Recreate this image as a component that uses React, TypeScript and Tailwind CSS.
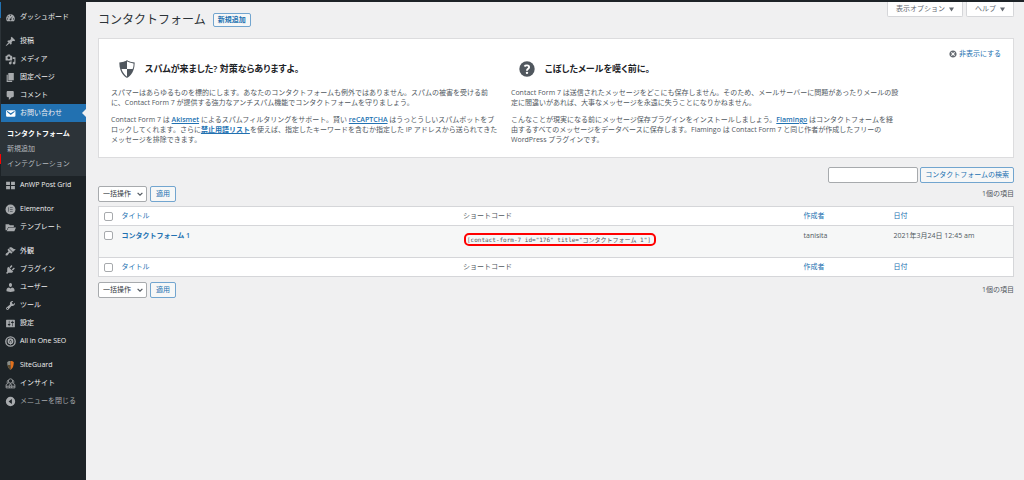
import type { ReactNode } from "react";

type MenuItem = {
  label: string;
  icon: ReactNode;
  gap?: boolean;
  active?: boolean;
  muted?: boolean;
};

type IconProps = {
  d: string;
  className?: string;
};

const Icon = ({ d, className = "size-[11px]" }: IconProps) => (
  <svg viewBox="0 0 20 20" fill="currentColor" fillRule="evenodd" className={className}>
    <path d={d} />
  </svg>
);

const paths = {
  dashboard:
    "M3.76 17h12.48c1.1-1.37 1.76-3.11 1.76-5 0-4.42-3.58-8-8-8s-8 3.58-8 8c0 1.89.66 3.63 1.76 5zM9 6a1 1 0 1 0 2 0a1 1 0 1 0-2 0zM4.800 8.500a1 1 0 1 0 2 0a1 1 0 1 0-2 0zM3.300 12.500a1 1 0 1 0 2 0a1 1 0 1 0-2 0zM14.700 12.500a1 1 0 1 0 2 0a1 1 0 1 0-2 0zM14.500 7.200l-3.200 5.200c.5.500.7 1.200.4 1.900-.4.900-1.400 1.300-2.300.9s-1.300-1.400-.9-2.300c.3-.7.9-1 1.600-1z",
  post: "M10.44 3.02l1.82-1.82 6.36 6.35-1.83 1.82c-1.05-.68-2.48-.57-3.41.36l-.75.75c-.92.93-1.04 2.35-.35 3.41l-1.83 1.82-2.41-2.41-2.8 2.79c-.42.42-3.38 2.71-3.8 2.29s1.86-3.39 2.28-3.81l2.79-2.79L4.1 9.36l1.83-1.82c1.05.69 2.48.57 3.4-.36l.75-.75c.93-.92 1.05-2.35.36-3.41z",
  media:
    "M13 11V4c0-.55-.45-1-1-1h-1.67L9 1H5L3.67 3H2c-.55 0-1 .45-1 1v7c0 .55.45 1 1 1h10c.55 0 1-.45 1-1zM7 4.5c1.38 0 2.5 1.12 2.5 2.5S8.38 9.5 7 9.5 4.5 8.38 4.5 7 5.62 4.5 7 4.5zM14 6h5v10.5c0 1.38-1.12 2.5-2.5 2.5S14 17.88 14 16.5s1.12-2.5 2.5-2.5c.17 0 .34.02.5.05V9h-3V6zm-4 8.05V13h2v3.5c0 1.38-1.12 2.5-2.5 2.5S7 17.88 7 16.5 8.12 14 9.5 14c.17 0 .34.02.5.05z",
  page: "M6 15V2h10v13H6zm-1 1h8v2H3V5h2v11z",
  comments:
    "M5 2h9c1.1 0 2 .9 2 2v7c0 1.1-.9 2-2 2h-2l-5 5v-5H5c-1.1 0-2-.9-2-2V4c0-1.1.9-2 2-2z",
  email:
    "M3.87 4h13.25C18.37 4 19 4.59 19 5.79v8.42c0 1.19-.63 1.79-1.88 1.79H3.87c-1.25 0-1.88-.6-1.88-1.79V5.79c0-1.2.63-1.79 1.88-1.79zm6.62 8.6l6.74-5.53c.24-.2.43-.66.13-1.07-.29-.41-.82-.42-1.17-.17l-5.7 3.86L4.8 5.83c-.35-.25-.88-.24-1.17.17-.3.41-.11.87.13 1.07z",
  grid: "M2 3h7v6H2zM11 3h7v6h-7zM2 11h7v6H2zM11 11h7v6h-7z",
  folder: "M1 15V4h6l2 2h7v3H6l-3 6zM6.500 10H20l-3 7H3z",
  appearance:
    "M14.48 11.06L7.41 3.99l1.5-1.5c.5-.56 2.3-.47 3.51.32 1.21.8 1.43 1.28 2.91 2.1 1.18.64 2.45 1.26 4.45.85zm-.71.71L6.7 4.7 4.93 6.47c-.39.39-.39 1.02 0 1.41l1.06 1.06c.39.39.39 1.03 0 1.42-.6.6-1.43 1.11-2.21 1.69-.35.26-.7.53-1.01.84C1.43 14.23.4 16.08 1.4 17.07c.99 1 2.84-.03 4.18-1.36.31-.31.58-.66.85-1.02.57-.78 1.08-1.61 1.69-2.21.39-.39 1.02-.39 1.41 0l1.06 1.06c.39.39 1.02.39 1.41 0z",
  plugins:
    "M13.11 4.36L9.87 7.6 8 5.73l3.24-3.24c.35-.34 1.05-.2 1.56.32.52.51.66 1.21.31 1.55zm-8 1.77l.91-1.12 9.01 9.01-1.19.84c-.71.71-2.63 1.16-3.82 1.16H6.14L4.9 17.26c-.59.59-1.54.59-2.12 0-.59-.58-.59-1.53 0-2.12l1.24-1.24v-3.88c0-1.13.4-3.19 1.09-3.89zm7.26 3.97l3.24-3.24c.34-.35 1.04-.21 1.55.31.52.51.66 1.21.31 1.55l-3.24 3.25z",
  users:
    "M10 9.25c-2.27 0-2.73-3.44-2.73-3.44C7 4.02 7.82 2 9.97 2c2.16 0 2.98 2.02 2.71 3.81 0 0-.41 3.44-2.68 3.44zm0 2.57L12.72 10c2.39 0 4.52 2.33 4.52 4.53v2.49s-3.65 1.13-7.24 1.13c-3.65 0-7.24-1.13-7.24-1.13v-2.49c0-2.25 1.94-4.48 4.47-4.48z",
  tools:
    "M16.68 9.77c-1.34 1.34-3.3 1.67-4.95.99l-5.41 6.52c-.99.99-2.59.99-3.58 0s-.99-2.59 0-3.57l6.52-5.42c-.68-1.65-.35-3.61.99-4.95 1.28-1.28 3.12-1.62 4.72-1.06l-2.89 2.89 2.82 2.82 2.86-2.87c.53 1.58.18 3.39-1.08 4.65zM3.81 16.21c.4.39 1.04.39 1.43 0 .4-.4.4-1.04 0-1.43-.39-.4-1.03-.4-1.43 0-.39.39-.39 1.03 0 1.43z",
  settings:
    "M18 16V4c0-.55-.45-1-1-1H3c-.55 0-1 .45-1 1v12c0 .55.45 1 1 1h14c.55 0 1-.45 1-1zM8 11h1c.55 0 1 .45 1 1s-.45 1-1 1H8v1.5c0 .28-.22.5-.5.5s-.5-.22-.5-.5V13H6c-.55 0-1-.45-1-1s.45-1 1-1h1V5.5c0-.28.22-.5.5-.5s.5.22.5.5V11zm5-2h-1c-.55 0-1-.45-1-1s.45-1 1-1h1V5.5c0-.28.22-.5.5-.5s.5.22.5.5V7h1c.55 0 1 .45 1 1s-.45 1-1 1h-1v5.5c0 .28-.22.5-.5.5s-.5-.22-.5-.5V9z",
  collapse: "M10 1.500a8.500 8.500 0 1 0 0 17a8.500 8.500 0 1 0 0-17zM12.500 5.500v9L6.500 10z",
  shield:
    "M10 2s3 2 7 2c0 11-7 14-7 14S3 15 3 4c4 0 7-2 7-2zm0 8h5s1-1 1-5c0 0-5-1-6-2v7H5c1 4 5 7 5 7v-7z",
  dismiss:
    "M10 1c5 0 9 4 9 9s-4 9-9 9-9-4-9-9 4-9 9-9zm5 12l-3-3 3-3-2-2-3 3-3-3-2 2 3 3-3 3 2 2 3-3 3 3z",
};

const ElementorIcon = () => (
  <svg viewBox="0 0 20 20" className="size-[11px]">
    <circle cx="10" cy="10" r="9" fill="currentColor" />
    <path d="M6.500 6v8M9 6.500h5M9 10h5M9 13.500h5" stroke="#50575e" strokeWidth="1.500" />
  </svg>
);

const SeoIcon = () => (
  <svg viewBox="0 0 20 20" className="size-[11px]" fill="none" stroke="currentColor">
    <circle cx="10" cy="10" r="8.500" strokeWidth="2.500" />
    <circle cx="10" cy="9.500" r="4" strokeWidth="2.500" />
    <path d="M8.500 7v3h3V7M10 10v6" strokeWidth="1.500" />
  </svg>
);

const GuardIcon = () => (
  <svg viewBox="0 0 20 20" className="size-[11px]">
    <path d="M10 2C7 2 5 3 4 4c0 7 2 11 6 14z" fill="#8b8f8a" />
    <path d="M10 2c3 0 5 1 6 2 0 7-2 11-6 14z" fill="#e2711d" />
    <path d="M10 9H5c.5 4 2 7 5 9z" fill="#5e4a2c" />
  </svg>
);

const InsightIcon = () => (
  <svg viewBox="0 0 20 20" className="size-[11px]" fill="none" stroke="currentColor" strokeWidth="1.500">
    <circle cx="10" cy="5.500" r="4" />
    <path d="M7 8.500L2 12v6h16v-6l-5-3.500M2 15h5l3-5 3 5h5M8 18v-3h4v3M4 9a8 8 0 0 1 1-5M16 9a8 8 0 0 0-1-5" />
  </svg>
);

const HelpIcon = () => (
  <svg viewBox="0 0 20 20" className="size-[22px] text-[#50575e]">
    <circle cx="10" cy="10" r="7" fill="currentColor" />
    <path
      d="M7.700 7.700c.8-1.300 4.200-1.400 4.200.6 0 1.500-2 1.500-2 3.300"
      fill="none"
      stroke="#fff"
      strokeWidth="1.700"
    />
    <circle cx="10" cy="13.500" r="1.100" fill="#fff" />
  </svg>
);

const menu: MenuItem[] = [
  { label: "ダッシュボード", icon: <Icon d={paths.dashboard} /> },
  { label: "投稿", icon: <Icon d={paths.post} />, gap: true },
  { label: "メディア", icon: <Icon d={paths.media} /> },
  { label: "固定ページ", icon: <Icon d={paths.page} /> },
  { label: "コメント", icon: <Icon d={paths.comments} /> },
  { label: "お問い合わせ", icon: <Icon d={paths.email} />, active: true },
  { label: "AnWP Post Grid", icon: <Icon d={paths.grid} /> },
  { label: "Elementor", icon: <ElementorIcon />, gap: true },
  { label: "テンプレート", icon: <Icon d={paths.folder} /> },
  { label: "外観", icon: <Icon d={paths.appearance} />, gap: true },
  { label: "プラグイン", icon: <Icon d={paths.plugins} /> },
  { label: "ユーザー", icon: <Icon d={paths.users} /> },
  { label: "ツール", icon: <Icon d={paths.tools} /> },
  { label: "設定", icon: <Icon d={paths.settings} /> },
  { label: "All in One SEO", icon: <SeoIcon /> },
  { label: "SiteGuard", icon: <GuardIcon />, gap: true },
  { label: "インサイト", icon: <InsightIcon /> },
  { label: "メニューを閉じる", icon: <Icon d={paths.collapse} />, muted: true },
];

const Sidebar = () => (
  <aside className="flex w-[86px] shrink-0 bg-[#1d2327]">
    {/* edge strip */}
    <div className="w-px shrink-0">
      <div className="h-4 bg-[#2271b1]" />
      <div className="h-[136px] bg-[#2c3338]" />
      <div className="h-[10px] bg-[#ff0000]" />
    </div>
    <nav className="flex-1 pt-[6px]">
      <ul>
        {menu.map((item) => (
          <li key={item.label} className={item.gap ? "mt-[6px]" : ""}>
            <a
              href="#"
              className={`relative flex h-[18px] items-center gap-1 pl-1 whitespace-nowrap ${
                item.active ? "bg-[#2271b1] text-white" : "text-[#a7aaad]"
              }`}
            >
              {item.icon}
              <span className={item.muted ? "text-[7px]" : "text-[7px] text-[#f0f0f1]"}>
                {item.label}
              </span>
              {item.active && (
                <span className="absolute top-[5px] right-0 border-y-4 border-r-4 border-y-transparent border-r-[#f0f0f1]" />
              )}
            </a>
            {item.active && (
              <ul className="bg-[#2c3338] pt-1 pb-[5px] pl-[6px] text-[7px] leading-[15px] text-[#b4b9be]">
                <li>
                  <a href="#" className="font-semibold text-white">
                    コンタクトフォーム
                  </a>
                </li>
                <li>
                  <a href="#">新規追加</a>
                </li>
                <li>
                  <a href="#">インテグレーション</a>
                </li>
              </ul>
            )}
          </li>
        ))}
      </ul>
    </nav>
  </aside>
);

const Link = ({ children }: { children: ReactNode }) => (
  <a href="#" className="font-semibold text-[#2271b1] underline">
    {children}
  </a>
);

type WelcomeColumnProps = {
  icon: ReactNode;
  title: string;
  children: ReactNode;
};

const WelcomeColumn = ({ icon, title, children }: WelcomeColumnProps) => (
  <div className="w-96 whitespace-nowrap">
    <h2 className="flex items-center gap-[7px] pl-[5px] text-[9px] leading-[22px] font-semibold text-[#1d2327] [font-feature-settings:'palt']">
      {icon}
      {title}
    </h2>
    <div className="mt-2 space-y-[7px]">{children}</div>
  </div>
);

const WelcomePanel = () => (
  <section className="relative flex gap-4 border border-[#dcdcde] bg-white px-3 pt-[19px] pb-3 text-[7px] leading-[10px] text-[#50575e]">
    <a href="#" className="absolute top-[10px] right-3 flex items-center gap-[2px] text-[#2271b1]">
      <Icon d={paths.dismiss} className="size-2 text-[#646970]" />
      非表示にする
    </a>
    <WelcomeColumn
      icon={<Icon d={paths.shield} className="size-[22px] text-[#50575e]" />}
      title="スパムが来ました? 対策ならありますよ。"
    >
      <p>
        スパマーはあらゆるものを標的にします。あなたのコンタクトフォームも例外ではありません。スパムの被害を受ける前
        <br />
        に、Contact Form 7 が提供する強力なアンチスパム機能でコンタクトフォームを守りましょう。
      </p>
      <p>
        Contact Form 7 は <Link>Akismet</Link> によるスパムフィルタリングをサポート。賢い{" "}
        <Link>reCAPTCHA</Link> はうっとうしいスパムボットをブ
        <br />
        ロックしてくれます。さらに<Link>禁止用語リスト</Link>
        を使えば、指定したキーワードを含むか指定した IP アドレスから送られてきた
        <br />
        メッセージを排除できます。
      </p>
    </WelcomeColumn>
    <WelcomeColumn icon={<HelpIcon />} title="こぼしたメールを嘆く前に。">
      <p>
        Contact Form 7
        は送信されたメッセージをどこにも保存しません。そのため、メールサーバーに問題があったりメールの設
        <br />
        定に間違いがあれば、大事なメッセージを永遠に失うことになりかねません。
      </p>
      <p>
        こんなことが現実になる前にメッセージ保存プラグインをインストールしましょう。
        <Link>Flamingo</Link> はコンタクトフォームを経
        <br />
        由するすべてのメッセージをデータベースに保存します。Flamingo は Contact Form 7
        と同じ作者が作成したフリーの
        <br />
        WordPress プラグインです。
      </p>
    </WelcomeColumn>
  </section>
);

const TableNav = () => (
  <div className="flex h-4 items-center justify-between text-[7px] text-[#50575e]">
    <div className="flex gap-[3px]">
      <div className="relative">
        <select
          aria-label="一括操作"
          className="block h-4 w-[49px] appearance-none rounded-xs border border-[#a7aaad] bg-white pl-1 text-[#2c3338]"
        >
          <option>一括操作</option>
        </select>
        <svg
          viewBox="0 0 10 10"
          className="pointer-events-none absolute top-[5px] right-1 size-[6px]"
          fill="none"
          stroke="#50575e"
          strokeWidth="2"
        >
          <path d="M1 3l4 4 4-4" />
        </svg>
      </div>
      <button
        type="button"
        className="h-4 w-[26px] rounded-xs border border-[#72a5cf] bg-[#f6f7f7] text-[#2271b1]"
      >
        適用
      </button>
    </div>
    <span>1個の項目</span>
  </div>
);

const checkboxClass = "block size-[9px] appearance-none rounded-xs border border-[#a7aaad] bg-white";

const HeadRow = () => (
  <tr className="h-[19px] bg-white text-left">
    <td className="pl-[5px]">
      <input type="checkbox" aria-label="すべて選択" className={checkboxClass} />
    </td>
    <th className="pl-[5px] font-normal">
      <a href="#" className="text-[#2271b1]">
        タイトル
      </a>
    </th>
    <th className="pl-[6px] font-normal">ショートコード</th>
    <th className="pl-[6px] font-normal">
      <a href="#" className="text-[#2271b1]">
        作成者
      </a>
    </th>
    <th className="pl-[6px] font-normal">
      <a href="#" className="text-[#2271b1]">
        日付
      </a>
    </th>
  </tr>
);

const FormTable = () => (
  <table className="mt-1 w-full table-fixed border border-[#d5d6d9] text-[7px] leading-[10px] text-[#50575e]">
    <colgroup>
      <col className="w-[18px]" />
      <col />
      <col />
      <col className="w-[90px]" />
      <col className="w-[126px]" />
    </colgroup>
    <thead className="border-b border-[#d5d6d9]">
      <HeadRow />
    </thead>
    <tbody>
      <tr className="h-8 bg-[#f6f7f7] align-top">
        <td className="pt-[5px] pl-[5px]">
          <input
            type="checkbox"
            aria-label="コンタクトフォーム 1を選択"
            className={checkboxClass}
          />
        </td>
        <td className="pt-[5px] pl-[5px]">
          <a href="#" className="font-semibold text-[#2271b1]">
            コンタクトフォーム 1
          </a>
        </td>
        <td className="pt-[7px] pl-[7px]">
          <input
            readOnly
            aria-label="ショートコード"
            value={'[contact-form-7 id="176" title="コンタクトフォーム 1"]'}
            className="block h-[13px] w-[192px] rounded-[5px] border-2 border-[#ff0000] px-px font-['DejaVu_Sans_Mono','Noto_Sans_CJK_JP',monospace] text-[6px] text-[#50575e]"
          />
        </td>
        <td className="pt-[5px] pl-[6px]">tanisita</td>
        <td className="pt-[5px] pl-[6px]">2021年3月24日 12:45 am</td>
      </tr>
    </tbody>
    <tfoot className="border-t border-[#d5d6d9]">
      <HeadRow />
    </tfoot>
  </table>
);

const MetaButton = ({ label }: { label: string }) => (
  <button
    type="button"
    className="flex h-[15px] items-center gap-1 rounded-b-xs border border-t-0 border-[#d5d6d9] bg-white px-2"
  >
    {label}
    <svg viewBox="0 0 10 10" className="size-[5px]" fill="currentColor">
      <path d="M0 1h10L5 9z" />
    </svg>
  </button>
);

const App = () => {
  return (
    <div className="flex min-h-screen flex-col bg-[#f0f0f1] font-['Open_Sans','Noto_Sans_CJK_JP',sans-serif]">
      <div className="h-[2px] bg-[#1d2327]" />
      <div className="flex flex-1">
        <Sidebar />
        <main className="min-w-0 flex-1 pr-[10px] pl-3">
          <div className="flex h-9 items-start justify-between">
            <div className="flex items-center gap-[7px] pt-[9px]">
              <h1 className="text-[12px] leading-[18px] text-[#2c3338]">コンタクトフォーム</h1>
              <a
                href="#"
                className="rounded-xs border border-[#72a5cf] bg-[#f6f7f7] px-1 text-[7px] leading-3 font-semibold text-[#2271b1]"
              >
                新規追加
              </a>
            </div>
            <div className="flex gap-[3px] text-[7px] text-[#646970]">
              <MetaButton label="表示オプション" />
              <MetaButton label="ヘルプ" />
            </div>
          </div>
          <WelcomePanel />
          <form className="mt-[9px] mb-[3px] flex justify-end gap-[2px] text-[7px]">
            <input
              type="search"
              aria-label="コンタクトフォームの検索"
              className="h-4 w-[90px] rounded-xs border border-[#a7aaad] bg-white px-1"
            />
            <button
              type="button"
              className="h-4 rounded-xs border border-[#72a5cf] bg-[#f6f7f7] px-1 text-[#2271b1]"
            >
              コンタクトフォームの検索
            </button>
          </form>
          <TableNav />
          <FormTable />
          <div className="mt-[5px]">
            <TableNav />
          </div>
        </main>
      </div>
    </div>
  );
};

export default App;
